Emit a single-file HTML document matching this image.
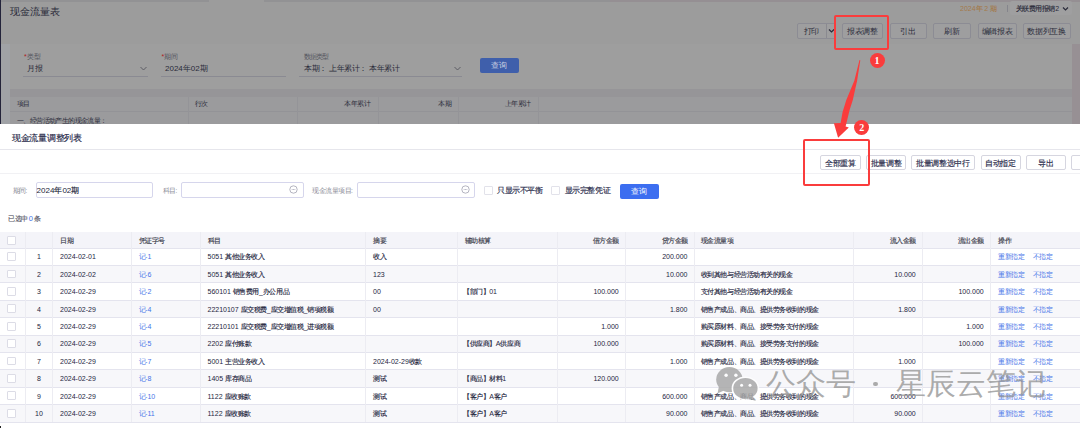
<!DOCTYPE html>
<html><head><meta charset="utf-8"><style>
html,body{margin:0;padding:0;width:1080px;height:428px;overflow:hidden;background:#fff}
body{position:relative;font-family:"Liberation Sans",sans-serif}
.t{position:absolute;white-space:nowrap}
.b{position:absolute}
</style></head><body>
<div class="b" style="left:0px;top:0px;width:1080.00px;height:124.00px;background:#9c9c9c"></div>
<div class="b" style="left:0px;top:0px;width:1080.00px;height:2.00px;background:#929294"></div>
<div class="b" style="left:209px;top:0px;width:55.00px;height:2.00px;background:#9c9c9c"></div>
<div class="b" style="left:610px;top:0px;width:470.00px;height:2.00px;background:#958f93"></div>
<div class="b" style="left:0px;top:0px;width:1.20px;height:124.00px;background:#23233a"></div>
<div class="b" style="left:1.2px;top:44px;width:8.80px;height:80.00px;background:#a0a2a6"></div>
<div class="b" style="left:10px;top:44px;width:1062.00px;height:45.00px;background:#9e9e9e"></div>
<div class="b" style="left:10px;top:89px;width:1070.00px;height:8.00px;background:#969598"></div>
<div class="b" style="left:1072px;top:44px;width:8.00px;height:80.00px;background:#979094"></div>
<div class="b" style="left:10px;top:97px;width:1062.00px;height:27.00px;background:#9b9b9d"></div>
<div class="b" style="left:10px;top:110.6px;width:1062.00px;height:0.90px;background:#939397"></div>
<div class="b" style="left:188px;top:97px;width:0.80px;height:27.00px;background:#949498"></div>
<div class="b" style="left:297px;top:97px;width:0.80px;height:27.00px;background:#949498"></div>
<div class="b" style="left:377.5px;top:97px;width:0.80px;height:27.00px;background:#949498"></div>
<div class="b" style="left:457.5px;top:97px;width:0.80px;height:27.00px;background:#949498"></div>
<div class="b" style="left:537.5px;top:97px;width:0.80px;height:27.00px;background:#949498"></div>
<div class="t" style="left:10px;top:6.00px;font-size:10px;line-height:12px;color:#2a2b3a;">现金流量表</div>
<div class="t" style="left:960px;top:2.70px;font-size:7px;line-height:12px;color:#a47a4a;">2024<span style="letter-spacing:-0.20px;-webkit-text-stroke:0.15px currentColor">年</span> 2 <span style="letter-spacing:-0.20px;-webkit-text-stroke:0.15px currentColor">期</span></div>
<div class="b" style="left:1007.2px;top:5px;width:0.80px;height:7.00px;background:#85858c"></div>
<div class="b" style="left:1009.5px;top:1px;width:62.50px;height:14.00px;background:#9f9fa0;border-radius:2px"></div>
<div class="t" style="left:1015.5px;top:2.70px;font-size:7px;line-height:12px;color:#2a2b3a;"><span style="letter-spacing:-0.45px;-webkit-text-stroke:0.15px currentColor">关联费用报销</span><span style="margin-left:0.5px">2</span></div>
<svg class="b" style="left:1062px;top:6px" width="7" height="6" viewBox="0 0 7 6"><path d="M1 1.5 L3.5 4 L6 1.5" fill="none" stroke="#2a2b3a" stroke-width="1.2"/></svg>
<div class="b" style="left:797px;top:23.2px;width:39.00px;height:15.40px;background:#9e9e9f;border:0.8px solid #8c8c94;border-radius:2px;box-sizing:border-box"></div>
<div class="t" style="left:716.5px;width:200px;text-align:center;top:25.60px;font-size:8px;line-height:12px;color:#2a2b3a;"></div>
<div class="t" style="left:711.5px;width:200px;text-align:center;top:25.60px;font-size:8px;line-height:12px;color:#2a2b3a;"><span style="letter-spacing:-0.35px;">打印</span></div>
<div class="b" style="left:826px;top:24px;width:0.80px;height:14.00px;background:#8a8a90"></div>
<svg class="b" style="left:827.5px;top:28px" width="7" height="6" viewBox="0 0 7 6"><path d="M1 1.5 L3.5 4 L6 1.5" fill="none" stroke="#2a2b3a" stroke-width="1.2"/></svg>
<div class="b" style="left:842px;top:23.2px;width:40.50px;height:15.40px;background:#9e9e9f;border:0.8px solid #8c8c94;border-radius:2px;box-sizing:border-box"></div>
<div class="t" style="left:762.25px;width:200px;text-align:center;top:25.60px;font-size:8px;line-height:12px;color:#2a2b3a;"><span style="letter-spacing:-0.35px;">报表调整</span></div>
<div class="b" style="left:889.5px;top:23.2px;width:37.25px;height:15.40px;background:#9e9e9f;border:0.8px solid #8c8c94;border-radius:2px;box-sizing:border-box"></div>
<div class="t" style="left:808.125px;width:200px;text-align:center;top:25.60px;font-size:8px;line-height:12px;color:#2a2b3a;"><span style="letter-spacing:-0.35px;">引出</span></div>
<div class="b" style="left:932.5px;top:23.2px;width:38.50px;height:15.40px;background:#9e9e9f;border:0.8px solid #8c8c94;border-radius:2px;box-sizing:border-box"></div>
<div class="t" style="left:851.75px;width:200px;text-align:center;top:25.60px;font-size:8px;line-height:12px;color:#2a2b3a;"><span style="letter-spacing:-0.35px;">刷新</span></div>
<div class="b" style="left:977.5px;top:23.2px;width:39.25px;height:15.40px;background:#9e9e9f;border:0.8px solid #8c8c94;border-radius:2px;box-sizing:border-box"></div>
<div class="t" style="left:897.125px;width:200px;text-align:center;top:25.60px;font-size:8px;line-height:12px;color:#2a2b3a;"><span style="letter-spacing:-0.35px;">编辑报表</span></div>
<div class="b" style="left:1022.5px;top:23.2px;width:48.25px;height:15.40px;background:#9e9e9f;border:0.8px solid #8c8c94;border-radius:2px;box-sizing:border-box"></div>
<div class="t" style="left:946.625px;width:200px;text-align:center;top:25.60px;font-size:8px;line-height:12px;color:#2a2b3a;"><span style="letter-spacing:-0.35px;">数据列互换</span></div>
<div class="t" style="left:24px;top:51.00px;font-size:7px;line-height:12px;color:#55565f;"><span style="color:#b02020">*</span>类型</div>
<div class="t" style="left:27px;top:62.50px;font-size:8px;line-height:12px;color:#2a2b3a;">月报</div>
<svg class="b" style="left:139.5px;top:65.5px" width="7" height="5" viewBox="0 0 7 5"><path d="M0.5 1 L3.5 4 L6.5 1" fill="none" stroke="#55565f" stroke-width="0.9"/></svg>
<div class="b" style="left:23px;top:75.5px;width:125.00px;height:0.80px;background:#8a8a92"></div>
<div class="t" style="left:161.5px;top:51.00px;font-size:7px;line-height:12px;color:#55565f;"><span style="color:#b02020">*</span>期间</div>
<div class="t" style="left:165px;top:62.50px;font-size:8px;line-height:12px;color:#2a2b3a;">2024年02期</div>
<div class="b" style="left:161px;top:75.5px;width:125.00px;height:0.80px;background:#8a8a92"></div>
<div class="t" style="left:303.5px;top:51.00px;font-size:6.5px;line-height:12px;color:#55565f;"><span style="letter-spacing:-0.70px;">数据类型</span></div>
<div class="t" style="left:304px;top:62.50px;font-size:8px;line-height:12px;color:#2a2b3a;"><span style="letter-spacing:-0.40px;">本期：</span>&nbsp;<span style="letter-spacing:-0.40px;">上年累计：</span>&nbsp;<span style="letter-spacing:-0.40px;">本年累计</span></div>
<svg class="b" style="left:453.5px;top:65.5px" width="7" height="5" viewBox="0 0 7 5"><path d="M0.5 1 L3.5 4 L6.5 1" fill="none" stroke="#55565f" stroke-width="0.9"/></svg>
<div class="b" style="left:299px;top:75.5px;width:163.00px;height:0.80px;background:#8a8a92"></div>
<div class="b" style="left:479.5px;top:58px;width:39.25px;height:15.00px;background:#3f5fab;border-radius:2px"></div>
<div class="t" style="left:399px;width:200px;text-align:center;top:60.30px;font-size:8px;line-height:12px;color:#cdd3e3;">查询</div>
<div class="t" style="left:16.5px;top:98.00px;font-size:7px;line-height:12px;color:#2a2b3a;"><span style="letter-spacing:-0.60px;">项目</span></div>
<div class="t" style="left:195px;top:98.00px;font-size:7px;line-height:12px;color:#2a2b3a;"><span style="letter-spacing:-0.60px;">行次</span></div>
<div class="t" style="right:710px;top:98.00px;font-size:7px;line-height:12px;color:#2a2b3a;"><span style="letter-spacing:-0.60px;">本年累计</span></div>
<div class="t" style="right:628.9px;top:98.00px;font-size:7px;line-height:12px;color:#2a2b3a;"><span style="letter-spacing:-0.60px;">本期</span></div>
<div class="t" style="right:549.3px;top:98.00px;font-size:7px;line-height:12px;color:#2a2b3a;"><span style="letter-spacing:-0.60px;">上年累计</span></div>
<div class="t" style="left:17px;top:114.50px;font-size:7px;line-height:12px;color:#2a2b3a;"><span style="letter-spacing:-0.60px;">一、经营活动产生的现金流量：</span></div>
<div class="b" style="left:0px;top:124px;width:1080.00px;height:304.00px;background:#fff"></div>
<div class="t" style="left:12px;top:132.00px;font-size:8.7px;line-height:12px;color:#262848;"><span style="letter-spacing:-0.30px;-webkit-text-stroke:0.15px currentColor">现金流量调整列表</span></div>
<div class="b" style="left:0px;top:149px;width:1080.00px;height:1.00px;background:#e6e6ec"></div>
<div class="b" style="left:0px;top:172.7px;width:1080.00px;height:0.80px;background:#f1f1f4"></div>
<div class="b" style="left:820px;top:155.25px;width:40.75px;height:14.25px;background:#fff;border:0.8px solid #d6d6e0;border-radius:2px;box-sizing:border-box"></div>
<div class="t" style="left:740.375px;width:200px;text-align:center;top:157.60px;font-size:8px;line-height:12px;color:#262848;"><span style="letter-spacing:-0.35px;-webkit-text-stroke:0.15px currentColor">全部重算</span></div>
<div class="b" style="left:866.25px;top:155.25px;width:39.50px;height:14.25px;background:#fff;border:0.8px solid #d6d6e0;border-radius:2px;box-sizing:border-box"></div>
<div class="t" style="left:786.0px;width:200px;text-align:center;top:157.60px;font-size:8px;line-height:12px;color:#262848;"><span style="letter-spacing:-0.35px;-webkit-text-stroke:0.15px currentColor">批量调整</span></div>
<div class="b" style="left:911.25px;top:155.25px;width:63.25px;height:14.25px;background:#fff;border:0.8px solid #d6d6e0;border-radius:2px;box-sizing:border-box"></div>
<div class="t" style="left:842.875px;width:200px;text-align:center;top:157.60px;font-size:8px;line-height:12px;color:#262848;"><span style="letter-spacing:-0.35px;-webkit-text-stroke:0.15px currentColor">批量调整选中行</span></div>
<div class="b" style="left:980.5px;top:155.25px;width:40.00px;height:14.25px;background:#fff;border:0.8px solid #d6d6e0;border-radius:2px;box-sizing:border-box"></div>
<div class="t" style="left:900.5px;width:200px;text-align:center;top:157.60px;font-size:8px;line-height:12px;color:#262848;"><span style="letter-spacing:-0.35px;-webkit-text-stroke:0.15px currentColor">自动指定</span></div>
<div class="b" style="left:1026.25px;top:155.25px;width:39.25px;height:14.25px;background:#fff;border:0.8px solid #d6d6e0;border-radius:2px;box-sizing:border-box"></div>
<div class="t" style="left:945.875px;width:200px;text-align:center;top:157.60px;font-size:8px;line-height:12px;color:#262848;"><span style="letter-spacing:-0.35px;-webkit-text-stroke:0.15px currentColor">导出</span></div>
<div class="b" style="left:1071.25px;top:155.25px;width:28.75px;height:14.25px;background:#fff;border:0.8px solid #d6d6e0;border-radius:2px;box-sizing:border-box"></div>
<div class="t" style="left:985.625px;width:200px;text-align:center;top:157.60px;font-size:8px;line-height:12px;color:#262848;"></div>
<div class="t" style="left:12.5px;top:184.70px;font-size:6.5px;line-height:12px;color:#8a8b96;"><span style="letter-spacing:-0.50px;">期间</span>:</div>
<div class="b" style="left:36px;top:182px;width:117.40px;height:15.60px;border:0.8px solid #d6d6ec;border-radius:2px;box-sizing:border-box"></div>
<div class="t" style="left:36.6px;top:184.70px;font-size:8px;line-height:12px;color:#23253a;">2024<span style="letter-spacing:0.00px;-webkit-text-stroke:0.15px currentColor">年</span>02<span style="letter-spacing:0.00px;-webkit-text-stroke:0.15px currentColor">期</span></div>
<div class="t" style="left:162.5px;top:184.70px;font-size:6.5px;line-height:12px;color:#8a8b96;"><span style="letter-spacing:-0.50px;">科目</span>:</div>
<div class="b" style="left:181px;top:182px;width:122.50px;height:15.60px;border:0.8px solid #d6d6ec;border-radius:2px;box-sizing:border-box"></div>
<svg class="b" style="left:289.05px;top:185.3px" width="9" height="9" viewBox="0 0 9 9"><circle cx="4.5" cy="4.5" r="3.7" fill="none" stroke="#9c9cac" stroke-width="0.75"/><circle cx="3.1" cy="4.5" r="0.5" fill="#a8a8b8"/><circle cx="4.5" cy="4.5" r="0.5" fill="#a8a8b8"/><circle cx="5.9" cy="4.5" r="0.5" fill="#a8a8b8"/></svg>
<div class="t" style="left:312px;top:184.70px;font-size:6.5px;line-height:12px;color:#8a8b96;"><span style="letter-spacing:-0.50px;">现金流量项目</span>:</div>
<div class="b" style="left:357.3px;top:182px;width:118.20px;height:15.60px;border:0.8px solid #d6d6ec;border-radius:2px;box-sizing:border-box"></div>
<svg class="b" style="left:461.0px;top:185.3px" width="9" height="9" viewBox="0 0 9 9"><circle cx="4.5" cy="4.5" r="3.7" fill="none" stroke="#9c9cac" stroke-width="0.75"/><circle cx="3.1" cy="4.5" r="0.5" fill="#a8a8b8"/><circle cx="4.5" cy="4.5" r="0.5" fill="#a8a8b8"/><circle cx="5.9" cy="4.5" r="0.5" fill="#a8a8b8"/></svg>
<div class="b" style="left:484px;top:185.75px;width:8.50px;height:8.75px;border:0.8px solid #e2e2ea;border-radius:1px;box-sizing:border-box"></div>
<div class="t" style="left:497px;top:184.60px;font-size:7.6px;line-height:12px;color:#282a4a;"><span style="letter-spacing:-0.40px;-webkit-text-stroke:0.15px currentColor">只显示不平衡</span></div>
<div class="b" style="left:551px;top:185.75px;width:8.50px;height:8.75px;border:0.8px solid #e2e2ea;border-radius:1px;box-sizing:border-box"></div>
<div class="t" style="left:564.5px;top:184.60px;font-size:7.6px;line-height:12px;color:#282a4a;"><span style="letter-spacing:-0.40px;-webkit-text-stroke:0.15px currentColor">显示完整凭证</span></div>
<div class="b" style="left:620px;top:183.5px;width:38.75px;height:15.00px;background:#3c6ef0;border-radius:2px"></div>
<div class="t" style="left:539.4px;width:200px;text-align:center;top:186.00px;font-size:8px;line-height:12px;color:#fff;">查询</div>
<div class="t" style="left:8px;top:213.00px;font-size:7px;line-height:12px;color:#5c5d6c;"><span style="letter-spacing:-0.50px;-webkit-text-stroke:0.15px currentColor">已选中</span><span style="color:#4574e8;font-size:7.5px;margin:0 1.4px 0 1.3px">0</span><span style="letter-spacing:-0.50px;-webkit-text-stroke:0.15px currentColor">条</span></div>
<div class="b" style="left:0px;top:232px;width:1080.00px;height:16.00px;background:#f4f4f9"></div>
<div class="b" style="left:0px;top:248.0px;width:1080.00px;height:17.40px;background:#fff"></div>
<div class="b" style="left:0px;top:265.4px;width:1080.00px;height:17.40px;background:#f7f7fa"></div>
<div class="b" style="left:0px;top:282.8px;width:1080.00px;height:17.40px;background:#fff"></div>
<div class="b" style="left:0px;top:300.2px;width:1080.00px;height:17.40px;background:#f7f7fa"></div>
<div class="b" style="left:0px;top:317.6px;width:1080.00px;height:17.40px;background:#fff"></div>
<div class="b" style="left:0px;top:335.0px;width:1080.00px;height:17.40px;background:#f7f7fa"></div>
<div class="b" style="left:0px;top:352.4px;width:1080.00px;height:17.40px;background:#fff"></div>
<div class="b" style="left:0px;top:369.79999999999995px;width:1080.00px;height:17.40px;background:#f7f7fa"></div>
<div class="b" style="left:0px;top:387.2px;width:1080.00px;height:17.40px;background:#fff"></div>
<div class="b" style="left:0px;top:404.6px;width:1080.00px;height:17.40px;background:#f7f7fa"></div>
<div class="b" style="left:0px;top:247.6px;width:1080.00px;height:0.80px;background:#e4e4ee"></div>
<div class="b" style="left:0px;top:265.0px;width:1080.00px;height:0.80px;background:#e4e4ee"></div>
<div class="b" style="left:0px;top:282.40000000000003px;width:1080.00px;height:0.80px;background:#e4e4ee"></div>
<div class="b" style="left:0px;top:299.8px;width:1080.00px;height:0.80px;background:#e4e4ee"></div>
<div class="b" style="left:0px;top:317.20000000000005px;width:1080.00px;height:0.80px;background:#e4e4ee"></div>
<div class="b" style="left:0px;top:334.6px;width:1080.00px;height:0.80px;background:#e4e4ee"></div>
<div class="b" style="left:0px;top:352.0px;width:1080.00px;height:0.80px;background:#e4e4ee"></div>
<div class="b" style="left:0px;top:369.4px;width:1080.00px;height:0.80px;background:#e4e4ee"></div>
<div class="b" style="left:0px;top:386.8px;width:1080.00px;height:0.80px;background:#e4e4ee"></div>
<div class="b" style="left:0px;top:404.20000000000005px;width:1080.00px;height:0.80px;background:#e4e4ee"></div>
<div class="b" style="left:0px;top:421.6px;width:1080.00px;height:0.80px;background:#e4e4ee"></div>
<div class="b" style="left:24.7px;top:232px;width:0.70px;height:190.00px;background:#ececf2"></div>
<div class="b" style="left:52.2px;top:232px;width:0.70px;height:190.00px;background:#ececf2"></div>
<div class="b" style="left:131.2px;top:232px;width:0.70px;height:190.00px;background:#ececf2"></div>
<div class="b" style="left:200.2px;top:232px;width:0.70px;height:190.00px;background:#ececf2"></div>
<div class="b" style="left:365.2px;top:232px;width:0.70px;height:190.00px;background:#ececf2"></div>
<div class="b" style="left:457.2px;top:232px;width:0.70px;height:190.00px;background:#ececf2"></div>
<div class="b" style="left:557.2px;top:232px;width:0.70px;height:190.00px;background:#ececf2"></div>
<div class="b" style="left:625.2px;top:232px;width:0.70px;height:190.00px;background:#ececf2"></div>
<div class="b" style="left:694.2px;top:232px;width:0.70px;height:190.00px;background:#ececf2"></div>
<div class="b" style="left:852.95px;top:232px;width:0.70px;height:190.00px;background:#ececf2"></div>
<div class="b" style="left:922.2px;top:232px;width:0.70px;height:190.00px;background:#ececf2"></div>
<div class="b" style="left:990.2px;top:232px;width:0.70px;height:190.00px;background:#ececf2"></div>
<div class="b" style="left:7.2px;top:236px;width:9.00px;height:9.00px;background:#fff;border:0.8px solid #dcdce6;border-radius:1px;box-sizing:border-box"></div>
<div class="t" style="left:60px;top:234.50px;font-size:7px;line-height:12px;color:#3a3b4a;"><span style="letter-spacing:-0.50px;-webkit-text-stroke:0.15px currentColor">日期</span></div>
<div class="t" style="left:138.5px;top:234.50px;font-size:7px;line-height:12px;color:#3a3b4a;"><span style="letter-spacing:-0.50px;-webkit-text-stroke:0.15px currentColor">凭证字号</span></div>
<div class="t" style="left:207.5px;top:234.50px;font-size:7px;line-height:12px;color:#3a3b4a;"><span style="letter-spacing:-0.50px;-webkit-text-stroke:0.15px currentColor">科目</span></div>
<div class="t" style="left:373px;top:234.50px;font-size:7px;line-height:12px;color:#3a3b4a;"><span style="letter-spacing:-0.50px;-webkit-text-stroke:0.15px currentColor">摘要</span></div>
<div class="t" style="left:464.5px;top:234.50px;font-size:7px;line-height:12px;color:#3a3b4a;"><span style="letter-spacing:-0.50px;-webkit-text-stroke:0.15px currentColor">辅助核算</span></div>
<div class="t" style="right:461.25px;top:234.50px;font-size:7px;line-height:12px;color:#3a3b4a;"><span style="letter-spacing:-0.50px;-webkit-text-stroke:0.15px currentColor">借方金额</span></div>
<div class="t" style="right:392.5px;top:234.50px;font-size:7px;line-height:12px;color:#3a3b4a;"><span style="letter-spacing:-0.50px;-webkit-text-stroke:0.15px currentColor">贷方金额</span></div>
<div class="t" style="left:700.75px;top:234.50px;font-size:7px;line-height:12px;color:#3a3b4a;"><span style="letter-spacing:-0.50px;-webkit-text-stroke:0.15px currentColor">现金流量项</span></div>
<div class="t" style="right:164.25px;top:234.50px;font-size:7px;line-height:12px;color:#3a3b4a;"><span style="letter-spacing:-0.50px;-webkit-text-stroke:0.15px currentColor">流入金额</span></div>
<div class="t" style="right:96.25px;top:234.50px;font-size:7px;line-height:12px;color:#3a3b4a;"><span style="letter-spacing:-0.50px;-webkit-text-stroke:0.15px currentColor">流出金额</span></div>
<div class="t" style="left:998px;top:234.50px;font-size:7px;line-height:12px;color:#3a3b4a;"><span style="letter-spacing:-0.50px;-webkit-text-stroke:0.15px currentColor">操作</span></div>
<div class="b" style="left:7.3px;top:252.2px;width:8.90px;height:8.90px;background:#fff;border:0.8px solid #dcdce6;border-radius:1px;box-sizing:border-box"></div>
<div class="t" style="left:-61px;width:200px;text-align:center;top:251.40px;font-size:7px;line-height:12px;color:#25263e;">1</div>
<div class="t" style="left:60px;top:251.40px;font-size:7px;line-height:12px;color:#25263e;">2024-02-01</div>
<div class="t" style="left:138.5px;top:251.40px;font-size:7px;line-height:12px;color:#4574e8;"><span style="letter-spacing:-0.45px;">记</span>-1</div>
<div class="t" style="left:207.5px;top:251.40px;font-size:7px;line-height:12px;color:#25263e;">5051 <span style="letter-spacing:-0.45px;-webkit-text-stroke:0.15px currentColor">其他业务收入</span></div>
<div class="t" style="left:373px;top:251.40px;font-size:7px;line-height:12px;color:#25263e;"><span style="letter-spacing:-0.45px;-webkit-text-stroke:0.15px currentColor">收入</span></div>
<div class="t" style="left:463px;top:251.40px;font-size:7px;line-height:12px;color:#25263e;"></div>
<div class="t" style="right:461.25px;top:251.40px;font-size:7px;line-height:12px;color:#25263e;"></div>
<div class="t" style="right:392.5px;top:251.40px;font-size:7px;line-height:12px;color:#25263e;">200.000</div>
<div class="t" style="left:700.75px;top:251.40px;font-size:7px;line-height:12px;color:#25263e;"></div>
<div class="t" style="right:164.25px;top:251.40px;font-size:7px;line-height:12px;color:#25263e;"></div>
<div class="t" style="right:96.25px;top:251.40px;font-size:7px;line-height:12px;color:#25263e;"></div>
<div class="t" style="left:998px;top:251.40px;font-size:7px;line-height:12px;color:#4574e8;"><span style="letter-spacing:-0.45px;">重新指定</span></div>
<div class="t" style="left:1032.5px;top:251.40px;font-size:7px;line-height:12px;color:#4574e8;"><span style="letter-spacing:-0.45px;">不指定</span></div>
<div class="b" style="left:7.3px;top:269.59999999999997px;width:8.90px;height:8.90px;background:#fff;border:0.8px solid #dcdce6;border-radius:1px;box-sizing:border-box"></div>
<div class="t" style="left:-61px;width:200px;text-align:center;top:268.80px;font-size:7px;line-height:12px;color:#25263e;">2</div>
<div class="t" style="left:60px;top:268.80px;font-size:7px;line-height:12px;color:#25263e;">2024-02-02</div>
<div class="t" style="left:138.5px;top:268.80px;font-size:7px;line-height:12px;color:#4574e8;"><span style="letter-spacing:-0.45px;">记</span>-6</div>
<div class="t" style="left:207.5px;top:268.80px;font-size:7px;line-height:12px;color:#25263e;">5051 <span style="letter-spacing:-0.45px;-webkit-text-stroke:0.15px currentColor">其他业务收入</span></div>
<div class="t" style="left:373px;top:268.80px;font-size:7px;line-height:12px;color:#25263e;">123</div>
<div class="t" style="left:463px;top:268.80px;font-size:7px;line-height:12px;color:#25263e;"></div>
<div class="t" style="right:461.25px;top:268.80px;font-size:7px;line-height:12px;color:#25263e;"></div>
<div class="t" style="right:392.5px;top:268.80px;font-size:7px;line-height:12px;color:#25263e;">10.000</div>
<div class="t" style="left:700.75px;top:268.80px;font-size:7px;line-height:12px;color:#25263e;"><span style="letter-spacing:-0.45px;-webkit-text-stroke:0.15px currentColor">收到其他与经营活动有关的现金</span></div>
<div class="t" style="right:164.25px;top:268.80px;font-size:7px;line-height:12px;color:#25263e;">10.000</div>
<div class="t" style="right:96.25px;top:268.80px;font-size:7px;line-height:12px;color:#25263e;"></div>
<div class="t" style="left:998px;top:268.80px;font-size:7px;line-height:12px;color:#4574e8;"><span style="letter-spacing:-0.45px;">重新指定</span></div>
<div class="t" style="left:1032.5px;top:268.80px;font-size:7px;line-height:12px;color:#4574e8;"><span style="letter-spacing:-0.45px;">不指定</span></div>
<div class="b" style="left:7.3px;top:287.0px;width:8.90px;height:8.90px;background:#fff;border:0.8px solid #dcdce6;border-radius:1px;box-sizing:border-box"></div>
<div class="t" style="left:-61px;width:200px;text-align:center;top:286.20px;font-size:7px;line-height:12px;color:#25263e;">3</div>
<div class="t" style="left:60px;top:286.20px;font-size:7px;line-height:12px;color:#25263e;">2024-02-29</div>
<div class="t" style="left:138.5px;top:286.20px;font-size:7px;line-height:12px;color:#4574e8;"><span style="letter-spacing:-0.45px;">记</span>-2</div>
<div class="t" style="left:207.5px;top:286.20px;font-size:7px;line-height:12px;color:#25263e;">560101 <span style="letter-spacing:-0.45px;-webkit-text-stroke:0.15px currentColor">销售费用</span>_<span style="letter-spacing:-0.45px;-webkit-text-stroke:0.15px currentColor">办公用品</span></div>
<div class="t" style="left:373px;top:286.20px;font-size:7px;line-height:12px;color:#25263e;">00</div>
<div class="t" style="left:463px;top:286.20px;font-size:7px;line-height:12px;color:#25263e;"><span style="letter-spacing:-0.45px;-webkit-text-stroke:0.15px currentColor">【部门】</span>01</div>
<div class="t" style="right:461.25px;top:286.20px;font-size:7px;line-height:12px;color:#25263e;">100.000</div>
<div class="t" style="right:392.5px;top:286.20px;font-size:7px;line-height:12px;color:#25263e;"></div>
<div class="t" style="left:700.75px;top:286.20px;font-size:7px;line-height:12px;color:#25263e;"><span style="letter-spacing:-0.45px;-webkit-text-stroke:0.15px currentColor">支付其他与经营活动有关的现金</span></div>
<div class="t" style="right:164.25px;top:286.20px;font-size:7px;line-height:12px;color:#25263e;"></div>
<div class="t" style="right:96.25px;top:286.20px;font-size:7px;line-height:12px;color:#25263e;">100.000</div>
<div class="t" style="left:998px;top:286.20px;font-size:7px;line-height:12px;color:#4574e8;"><span style="letter-spacing:-0.45px;">重新指定</span></div>
<div class="t" style="left:1032.5px;top:286.20px;font-size:7px;line-height:12px;color:#4574e8;"><span style="letter-spacing:-0.45px;">不指定</span></div>
<div class="b" style="left:7.3px;top:304.4px;width:8.90px;height:8.90px;background:#fff;border:0.8px solid #dcdce6;border-radius:1px;box-sizing:border-box"></div>
<div class="t" style="left:-61px;width:200px;text-align:center;top:303.60px;font-size:7px;line-height:12px;color:#25263e;">4</div>
<div class="t" style="left:60px;top:303.60px;font-size:7px;line-height:12px;color:#25263e;">2024-02-29</div>
<div class="t" style="left:138.5px;top:303.60px;font-size:7px;line-height:12px;color:#4574e8;"><span style="letter-spacing:-0.45px;">记</span>-4</div>
<div class="t" style="left:207.5px;top:303.60px;font-size:7px;line-height:12px;color:#25263e;">22210107 <span style="letter-spacing:-0.45px;-webkit-text-stroke:0.15px currentColor">应交税费</span>_<span style="letter-spacing:-0.45px;-webkit-text-stroke:0.15px currentColor">应交增值税</span>_<span style="letter-spacing:-0.45px;-webkit-text-stroke:0.15px currentColor">销项税额</span></div>
<div class="t" style="left:373px;top:303.60px;font-size:7px;line-height:12px;color:#25263e;">00</div>
<div class="t" style="left:463px;top:303.60px;font-size:7px;line-height:12px;color:#25263e;"></div>
<div class="t" style="right:461.25px;top:303.60px;font-size:7px;line-height:12px;color:#25263e;"></div>
<div class="t" style="right:392.5px;top:303.60px;font-size:7px;line-height:12px;color:#25263e;">1.800</div>
<div class="t" style="left:700.75px;top:303.60px;font-size:7px;line-height:12px;color:#25263e;"><span style="letter-spacing:-0.45px;-webkit-text-stroke:0.15px currentColor">销售产成品、商品、提供劳务收到的现金</span></div>
<div class="t" style="right:164.25px;top:303.60px;font-size:7px;line-height:12px;color:#25263e;">1.800</div>
<div class="t" style="right:96.25px;top:303.60px;font-size:7px;line-height:12px;color:#25263e;"></div>
<div class="t" style="left:998px;top:303.60px;font-size:7px;line-height:12px;color:#4574e8;"><span style="letter-spacing:-0.45px;">重新指定</span></div>
<div class="t" style="left:1032.5px;top:303.60px;font-size:7px;line-height:12px;color:#4574e8;"><span style="letter-spacing:-0.45px;">不指定</span></div>
<div class="b" style="left:7.3px;top:321.8px;width:8.90px;height:8.90px;background:#fff;border:0.8px solid #dcdce6;border-radius:1px;box-sizing:border-box"></div>
<div class="t" style="left:-61px;width:200px;text-align:center;top:321.00px;font-size:7px;line-height:12px;color:#25263e;">5</div>
<div class="t" style="left:60px;top:321.00px;font-size:7px;line-height:12px;color:#25263e;">2024-02-29</div>
<div class="t" style="left:138.5px;top:321.00px;font-size:7px;line-height:12px;color:#4574e8;"><span style="letter-spacing:-0.45px;">记</span>-4</div>
<div class="t" style="left:207.5px;top:321.00px;font-size:7px;line-height:12px;color:#25263e;">22210101 <span style="letter-spacing:-0.45px;-webkit-text-stroke:0.15px currentColor">应交税费</span>_<span style="letter-spacing:-0.45px;-webkit-text-stroke:0.15px currentColor">应交增值税</span>_<span style="letter-spacing:-0.45px;-webkit-text-stroke:0.15px currentColor">进项税额</span></div>
<div class="t" style="left:373px;top:321.00px;font-size:7px;line-height:12px;color:#25263e;"></div>
<div class="t" style="left:463px;top:321.00px;font-size:7px;line-height:12px;color:#25263e;"></div>
<div class="t" style="right:461.25px;top:321.00px;font-size:7px;line-height:12px;color:#25263e;">1.000</div>
<div class="t" style="right:392.5px;top:321.00px;font-size:7px;line-height:12px;color:#25263e;"></div>
<div class="t" style="left:700.75px;top:321.00px;font-size:7px;line-height:12px;color:#25263e;"><span style="letter-spacing:-0.45px;-webkit-text-stroke:0.15px currentColor">购买原材料、商品、接受劳务支付的现金</span></div>
<div class="t" style="right:164.25px;top:321.00px;font-size:7px;line-height:12px;color:#25263e;"></div>
<div class="t" style="right:96.25px;top:321.00px;font-size:7px;line-height:12px;color:#25263e;">1.000</div>
<div class="t" style="left:998px;top:321.00px;font-size:7px;line-height:12px;color:#4574e8;"><span style="letter-spacing:-0.45px;">重新指定</span></div>
<div class="t" style="left:1032.5px;top:321.00px;font-size:7px;line-height:12px;color:#4574e8;"><span style="letter-spacing:-0.45px;">不指定</span></div>
<div class="b" style="left:7.3px;top:339.2px;width:8.90px;height:8.90px;background:#fff;border:0.8px solid #dcdce6;border-radius:1px;box-sizing:border-box"></div>
<div class="t" style="left:-61px;width:200px;text-align:center;top:338.40px;font-size:7px;line-height:12px;color:#25263e;">6</div>
<div class="t" style="left:60px;top:338.40px;font-size:7px;line-height:12px;color:#25263e;">2024-02-29</div>
<div class="t" style="left:138.5px;top:338.40px;font-size:7px;line-height:12px;color:#4574e8;"><span style="letter-spacing:-0.45px;">记</span>-5</div>
<div class="t" style="left:207.5px;top:338.40px;font-size:7px;line-height:12px;color:#25263e;">2202 <span style="letter-spacing:-0.45px;-webkit-text-stroke:0.15px currentColor">应付账款</span></div>
<div class="t" style="left:373px;top:338.40px;font-size:7px;line-height:12px;color:#25263e;"></div>
<div class="t" style="left:463px;top:338.40px;font-size:7px;line-height:12px;color:#25263e;"><span style="letter-spacing:-0.45px;-webkit-text-stroke:0.15px currentColor">【供应商】</span>A<span style="letter-spacing:-0.45px;-webkit-text-stroke:0.15px currentColor">供应商</span></div>
<div class="t" style="right:461.25px;top:338.40px;font-size:7px;line-height:12px;color:#25263e;">100.000</div>
<div class="t" style="right:392.5px;top:338.40px;font-size:7px;line-height:12px;color:#25263e;"></div>
<div class="t" style="left:700.75px;top:338.40px;font-size:7px;line-height:12px;color:#25263e;"><span style="letter-spacing:-0.45px;-webkit-text-stroke:0.15px currentColor">购买原材料、商品、接受劳务支付的现金</span></div>
<div class="t" style="right:164.25px;top:338.40px;font-size:7px;line-height:12px;color:#25263e;"></div>
<div class="t" style="right:96.25px;top:338.40px;font-size:7px;line-height:12px;color:#25263e;">100.000</div>
<div class="t" style="left:998px;top:338.40px;font-size:7px;line-height:12px;color:#4574e8;"><span style="letter-spacing:-0.45px;">重新指定</span></div>
<div class="t" style="left:1032.5px;top:338.40px;font-size:7px;line-height:12px;color:#4574e8;"><span style="letter-spacing:-0.45px;">不指定</span></div>
<div class="b" style="left:7.3px;top:356.59999999999997px;width:8.90px;height:8.90px;background:#fff;border:0.8px solid #dcdce6;border-radius:1px;box-sizing:border-box"></div>
<div class="t" style="left:-61px;width:200px;text-align:center;top:355.80px;font-size:7px;line-height:12px;color:#25263e;">7</div>
<div class="t" style="left:60px;top:355.80px;font-size:7px;line-height:12px;color:#25263e;">2024-02-29</div>
<div class="t" style="left:138.5px;top:355.80px;font-size:7px;line-height:12px;color:#4574e8;"><span style="letter-spacing:-0.45px;">记</span>-7</div>
<div class="t" style="left:207.5px;top:355.80px;font-size:7px;line-height:12px;color:#25263e;">5001 <span style="letter-spacing:-0.45px;-webkit-text-stroke:0.15px currentColor">主营业务收入</span></div>
<div class="t" style="left:373px;top:355.80px;font-size:7px;line-height:12px;color:#25263e;">2024-02-29<span style="letter-spacing:-0.45px;-webkit-text-stroke:0.15px currentColor">收款</span></div>
<div class="t" style="left:463px;top:355.80px;font-size:7px;line-height:12px;color:#25263e;"></div>
<div class="t" style="right:461.25px;top:355.80px;font-size:7px;line-height:12px;color:#25263e;"></div>
<div class="t" style="right:392.5px;top:355.80px;font-size:7px;line-height:12px;color:#25263e;">1.000</div>
<div class="t" style="left:700.75px;top:355.80px;font-size:7px;line-height:12px;color:#25263e;"><span style="letter-spacing:-0.45px;-webkit-text-stroke:0.15px currentColor">销售产成品、商品、提供劳务收到的现金</span></div>
<div class="t" style="right:164.25px;top:355.80px;font-size:7px;line-height:12px;color:#25263e;">1.000</div>
<div class="t" style="right:96.25px;top:355.80px;font-size:7px;line-height:12px;color:#25263e;"></div>
<div class="t" style="left:998px;top:355.80px;font-size:7px;line-height:12px;color:#4574e8;"><span style="letter-spacing:-0.45px;">重新指定</span></div>
<div class="t" style="left:1032.5px;top:355.80px;font-size:7px;line-height:12px;color:#4574e8;"><span style="letter-spacing:-0.45px;">不指定</span></div>
<div class="b" style="left:7.3px;top:373.99999999999994px;width:8.90px;height:8.90px;background:#fff;border:0.8px solid #dcdce6;border-radius:1px;box-sizing:border-box"></div>
<div class="t" style="left:-61px;width:200px;text-align:center;top:373.20px;font-size:7px;line-height:12px;color:#25263e;">8</div>
<div class="t" style="left:60px;top:373.20px;font-size:7px;line-height:12px;color:#25263e;">2024-02-29</div>
<div class="t" style="left:138.5px;top:373.20px;font-size:7px;line-height:12px;color:#4574e8;"><span style="letter-spacing:-0.45px;">记</span>-8</div>
<div class="t" style="left:207.5px;top:373.20px;font-size:7px;line-height:12px;color:#25263e;">1405 <span style="letter-spacing:-0.45px;-webkit-text-stroke:0.15px currentColor">库存商品</span></div>
<div class="t" style="left:373px;top:373.20px;font-size:7px;line-height:12px;color:#25263e;"><span style="letter-spacing:-0.45px;-webkit-text-stroke:0.15px currentColor">测试</span></div>
<div class="t" style="left:463px;top:373.20px;font-size:7px;line-height:12px;color:#25263e;"><span style="letter-spacing:-0.45px;-webkit-text-stroke:0.15px currentColor">【商品】材料</span>1</div>
<div class="t" style="right:461.25px;top:373.20px;font-size:7px;line-height:12px;color:#25263e;">120.000</div>
<div class="t" style="right:392.5px;top:373.20px;font-size:7px;line-height:12px;color:#25263e;"></div>
<div class="t" style="left:700.75px;top:373.20px;font-size:7px;line-height:12px;color:#25263e;"></div>
<div class="t" style="right:164.25px;top:373.20px;font-size:7px;line-height:12px;color:#25263e;"></div>
<div class="t" style="right:96.25px;top:373.20px;font-size:7px;line-height:12px;color:#25263e;"></div>
<div class="t" style="left:998px;top:373.20px;font-size:7px;line-height:12px;color:#4574e8;"><span style="letter-spacing:-0.45px;">重新指定</span></div>
<div class="t" style="left:1032.5px;top:373.20px;font-size:7px;line-height:12px;color:#4574e8;"><span style="letter-spacing:-0.45px;">不指定</span></div>
<div class="b" style="left:7.3px;top:391.4px;width:8.90px;height:8.90px;background:#fff;border:0.8px solid #dcdce6;border-radius:1px;box-sizing:border-box"></div>
<div class="t" style="left:-61px;width:200px;text-align:center;top:390.60px;font-size:7px;line-height:12px;color:#25263e;">9</div>
<div class="t" style="left:60px;top:390.60px;font-size:7px;line-height:12px;color:#25263e;">2024-02-29</div>
<div class="t" style="left:138.5px;top:390.60px;font-size:7px;line-height:12px;color:#4574e8;"><span style="letter-spacing:-0.45px;">记</span>-10</div>
<div class="t" style="left:207.5px;top:390.60px;font-size:7px;line-height:12px;color:#25263e;">1122 <span style="letter-spacing:-0.45px;-webkit-text-stroke:0.15px currentColor">应收账款</span></div>
<div class="t" style="left:373px;top:390.60px;font-size:7px;line-height:12px;color:#25263e;"><span style="letter-spacing:-0.45px;-webkit-text-stroke:0.15px currentColor">测试</span></div>
<div class="t" style="left:463px;top:390.60px;font-size:7px;line-height:12px;color:#25263e;"><span style="letter-spacing:-0.45px;-webkit-text-stroke:0.15px currentColor">【客户】</span>A<span style="letter-spacing:-0.45px;-webkit-text-stroke:0.15px currentColor">客户</span></div>
<div class="t" style="right:461.25px;top:390.60px;font-size:7px;line-height:12px;color:#25263e;"></div>
<div class="t" style="right:392.5px;top:390.60px;font-size:7px;line-height:12px;color:#25263e;">600.000</div>
<div class="t" style="left:700.75px;top:390.60px;font-size:7px;line-height:12px;color:#25263e;"><span style="letter-spacing:-0.45px;-webkit-text-stroke:0.15px currentColor">销售产成品、商品、提供劳务收到的现金</span></div>
<div class="t" style="right:164.25px;top:390.60px;font-size:7px;line-height:12px;color:#25263e;">600.000</div>
<div class="t" style="right:96.25px;top:390.60px;font-size:7px;line-height:12px;color:#25263e;"></div>
<div class="t" style="left:998px;top:390.60px;font-size:7px;line-height:12px;color:#4574e8;"><span style="letter-spacing:-0.45px;">重新指定</span></div>
<div class="t" style="left:1032.5px;top:390.60px;font-size:7px;line-height:12px;color:#4574e8;"><span style="letter-spacing:-0.45px;">不指定</span></div>
<div class="b" style="left:7.3px;top:408.8px;width:8.90px;height:8.90px;background:#fff;border:0.8px solid #dcdce6;border-radius:1px;box-sizing:border-box"></div>
<div class="t" style="left:-61px;width:200px;text-align:center;top:408.00px;font-size:7px;line-height:12px;color:#25263e;">10</div>
<div class="t" style="left:60px;top:408.00px;font-size:7px;line-height:12px;color:#25263e;">2024-02-29</div>
<div class="t" style="left:138.5px;top:408.00px;font-size:7px;line-height:12px;color:#4574e8;"><span style="letter-spacing:-0.45px;">记</span>-11</div>
<div class="t" style="left:207.5px;top:408.00px;font-size:7px;line-height:12px;color:#25263e;">1122 <span style="letter-spacing:-0.45px;-webkit-text-stroke:0.15px currentColor">应收账款</span></div>
<div class="t" style="left:373px;top:408.00px;font-size:7px;line-height:12px;color:#25263e;"><span style="letter-spacing:-0.45px;-webkit-text-stroke:0.15px currentColor">测试</span></div>
<div class="t" style="left:463px;top:408.00px;font-size:7px;line-height:12px;color:#25263e;"><span style="letter-spacing:-0.45px;-webkit-text-stroke:0.15px currentColor">【客户】</span>A<span style="letter-spacing:-0.45px;-webkit-text-stroke:0.15px currentColor">客户</span></div>
<div class="t" style="right:461.25px;top:408.00px;font-size:7px;line-height:12px;color:#25263e;"></div>
<div class="t" style="right:392.5px;top:408.00px;font-size:7px;line-height:12px;color:#25263e;">90.000</div>
<div class="t" style="left:700.75px;top:408.00px;font-size:7px;line-height:12px;color:#25263e;"><span style="letter-spacing:-0.45px;-webkit-text-stroke:0.15px currentColor">销售产成品、商品、提供劳务收到的现金</span></div>
<div class="t" style="right:164.25px;top:408.00px;font-size:7px;line-height:12px;color:#25263e;">90.000</div>
<div class="t" style="right:96.25px;top:408.00px;font-size:7px;line-height:12px;color:#25263e;"></div>
<div class="t" style="left:998px;top:408.00px;font-size:7px;line-height:12px;color:#4574e8;"><span style="letter-spacing:-0.45px;">重新指定</span></div>
<div class="t" style="left:1032.5px;top:408.00px;font-size:7px;line-height:12px;color:#4574e8;"><span style="letter-spacing:-0.45px;">不指定</span></div>
<div class="b" style="left:0px;top:425.5px;width:1.00px;height:2.50px;background:#222"></div>
<div class="b" style="left:834.2px;top:15px;width:55.30px;height:35.30px;border:2px solid #fa3c3c;border-radius:2px;box-sizing:border-box"></div>
<div class="b" style="left:803.3px;top:139.1px;width:67.20px;height:47.20px;border:2px solid #fa3c3c;border-radius:2px;box-sizing:border-box"></div>
<div class="b" style="left:869.5px;top:52.5px;width:15px;height:15px;border-radius:50%;background:#fa3c3c;color:#fff;font-family:'Liberation Serif',serif;font-weight:bold;font-size:10px;line-height:15px;text-align:center">1</div>
<div class="b" style="left:854.25px;top:119.5px;width:15px;height:15px;border-radius:50%;background:#fa3c3c;color:#fff;font-family:'Liberation Serif',serif;font-weight:bold;font-size:10px;line-height:15px;text-align:center">2</div>
<svg class="b" style="left:0;top:0" width="1080" height="428" viewBox="0 0 1080 428"><path d="M859.5 60 L860.3 60.3 L857.1 80.7 L852.8 100 L849.6 110 L845.6 126.6 L848.8 127.4 L838.1 137.7 L833.9 123.2 L840.6 123 L842.6 112 L846.3 100 L854.3 80.7 Z" fill="#fa3c3c"/></svg>
<svg class="b" style="left:710px;top:355px;opacity:.82" width="60" height="50" viewBox="710 355 60 50"><ellipse cx="729.4" cy="379.6" rx="13.2" ry="12.6" fill="#a6a6a6"/><path d="M719 386 L717.5 393.5 L725 390 Z" fill="#a6a6a6"/><ellipse cx="745.4" cy="388.4" rx="13" ry="11.2" fill="#a6a6a6" stroke="#fff" stroke-width="1.6"/><path d="M752 396 L756 401 L748 398.5 Z" fill="#a6a6a6"/><circle cx="726.1" cy="375.3" r="1.7" fill="#fff"/><circle cx="735.9" cy="375.3" r="1.7" fill="#fff"/><circle cx="741.6" cy="385.2" r="1.5" fill="#fff"/><circle cx="750" cy="385.2" r="1.5" fill="#fff"/></svg>
<div class="t" style="left:765.5px;top:365px;font-size:30px;line-height:38px;color:rgba(150,150,150,.8);font-weight:500">公众号</div>
<div class="b" style="left:873px;top:381.5px;width:4.5px;height:4.5px;border-radius:50%;background:rgba(150,150,150,.8)"></div>
<div class="t" style="left:895.5px;top:365px;font-size:30px;line-height:38px;color:rgba(150,150,150,.8);font-weight:500">星辰云笔记</div>
</body></html>
